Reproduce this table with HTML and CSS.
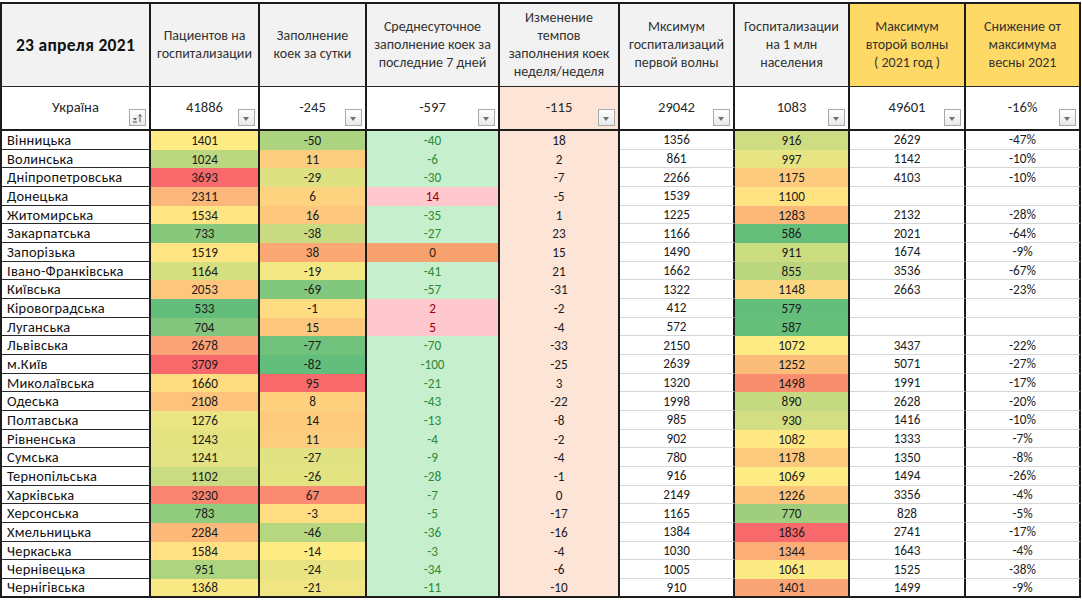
FILE: index.html
```html
<!DOCTYPE html>
<html lang="uk">
<head>
<meta charset="utf-8">
<title>23 апреля 2021</title>
<link rel="stylesheet" href="styles.css">
</head>
<body>
<div class="sheet">
  <div class="c hd first title">23 апреля 2021</div>
  <div class="c hd">Пациентов на<br>госпитализации</div>
  <div class="c hd">Заполнение<br>коек за сутки</div>
  <div class="c hd">Среднесуточное<br>заполнение коек за<br>последние 7 дней</div>
  <div class="c hd">Изменение<br>темпов<br>заполнения коек<br>неделя/неделя</div>
  <div class="c hd">Мксимум<br>госпитализаций<br>первой волны</div>
  <div class="c hd">Госпитализации<br>на 1 млн<br>населения</div>
  <div class="c hd gold">Максимум<br>второй волны<br>( 2021 год )</div>
  <div class="c hd gold">Снижение от<br>максимума<br>весны 2021</div>

  <div class="c uk first">Україна<span class="btn sortbtn"><svg width="11" height="11" viewBox="0 0 11 11"><path d="M1 6h4l-2 2.5z" fill="#555"/><path d="M1 10h4" stroke="#555" stroke-width="1"/><path d="M8 10V2.5M6.5 4.5L8 2.5l1.5 2" stroke="#555" stroke-width="1" fill="none"/></svg></span></div>
  <div class="c uk">41886<span class="btn"></span></div>
  <div class="c uk">-245<span class="btn"></span></div>
  <div class="c uk">-597<span class="btn"></span></div>
  <div class="c uk peach">-115<span class="btn"></span></div>
  <div class="c uk">29042<span class="btn"></span></div>
  <div class="c uk">1083<span class="btn"></span></div>
  <div class="c uk">49601<span class="btn"></span></div>
  <div class="c uk">-16%<span class="btn"></span></div>

  <div class="c nm first">Вінницька</div><div class="c sc" style="background:#FFEB84">1401</div><div class="c sc" style="background:#ACD37F">-50</div><div class="c gr">-40</div><div class="c pe">18</div><div class="c wh">1356</div><div class="c sc" style="background:#CEDD81">916</div><div class="c wh">2629</div><div class="c wh">-47%</div>
  <div class="c nm first">Волинська</div><div class="c sc" style="background:#BBD780">1024</div><div class="c sc" style="background:#FDCD7E">11</div><div class="c gr">-6</div><div class="c pe">2</div><div class="c wh">861</div><div class="c sc" style="background:#E7E483">997</div><div class="c wh">1142</div><div class="c wh">-10%</div>
  <div class="c nm first">Дніпропетровська</div><div class="c sc" style="background:#F86A6B">3693</div><div class="c sc" style="background:#DDE182">-29</div><div class="c gr">-30</div><div class="c pe">-7</div><div class="c wh">2266</div><div class="c sc" style="background:#FCCB7E">1175</div><div class="c wh">4103</div><div class="c wh">-10%</div>
  <div class="c nm first">Донецька</div><div class="c sc" style="background:#FCB87A">2311</div><div class="c sc" style="background:#FED37F">6</div><div class="c pk">14</div><div class="c pe">-5</div><div class="c wh">1539</div><div class="c sc" style="background:#FFE382">1100</div><div class="c wh"></div><div class="c wh"></div>
  <div class="c nm first">Житомирська</div><div class="c sc" style="background:#FFE483">1534</div><div class="c sc" style="background:#FDC77D">16</div><div class="c gr">-35</div><div class="c pe">1</div><div class="c wh">1225</div><div class="c sc" style="background:#FBB878">1283</div><div class="c wh">2132</div><div class="c wh">-28%</div>
  <div class="c nm first">Закарпатська</div><div class="c sc" style="background:#87C87D">733</div><div class="c sc" style="background:#C8DB81">-38</div><div class="c gr">-27</div><div class="c pe">23</div><div class="c wh">1166</div><div class="c sc" style="background:#65BF7B">586</div><div class="c wh">2021</div><div class="c wh">-64%</div>
  <div class="c nm first">Запорізька</div><div class="c sc" style="background:#FFE483">1519</div><div class="c sc" style="background:#FBA874">38</div><div class="c or">0</div><div class="c pe">15</div><div class="c wh">1490</div><div class="c sc" style="background:#CCDC81">911</div><div class="c wh">1674</div><div class="c wh">-9%</div>
  <div class="c nm first">Івано-Франківська</div><div class="c sc" style="background:#D4DF82">1164</div><div class="c sc" style="background:#F3E883">-19</div><div class="c gr">-41</div><div class="c pe">21</div><div class="c wh">1662</div><div class="c sc" style="background:#BAD780">855</div><div class="c wh">3536</div><div class="c wh">-67%</div>
  <div class="c nm first">Київська</div><div class="c sc" style="background:#FDC67D">2053</div><div class="c sc" style="background:#81C77D">-69</div><div class="c gr">-57</div><div class="c pe">-31</div><div class="c wh">1322</div><div class="c sc" style="background:#FDD680">1148</div><div class="c wh">2663</div><div class="c wh">-23%</div>
  <div class="c nm first">Кіровоградська</div><div class="c sc" style="background:#63BE7B">533</div><div class="c sc" style="background:#FEDC81">-1</div><div class="c pk">2</div><div class="c pe">-2</div><div class="c wh">412</div><div class="c sc" style="background:#63BE7B">579</div><div class="c wh"></div><div class="c wh"></div>
  <div class="c nm first">Луганська</div><div class="c sc" style="background:#82C77D">704</div><div class="c sc" style="background:#FDC87D">15</div><div class="c pk">5</div><div class="c pe">-4</div><div class="c wh">572</div><div class="c sc" style="background:#66BF7B">587</div><div class="c wh"></div><div class="c wh"></div>
  <div class="c nm first">Львівська</div><div class="c sc" style="background:#FBA376">2678</div><div class="c sc" style="background:#6FC17C">-77</div><div class="c gr">-70</div><div class="c pe">-33</div><div class="c wh">2150</div><div class="c sc" style="background:#FFEB84">1072</div><div class="c wh">3437</div><div class="c wh">-22%</div>
  <div class="c nm first">м.Київ</div><div class="c sc" style="background:#F8696B">3709</div><div class="c sc" style="background:#63BE7B">-82</div><div class="c gr">-100</div><div class="c pe">-25</div><div class="c wh">2639</div><div class="c sc" style="background:#FBBE7A">1252</div><div class="c wh">5071</div><div class="c wh">-27%</div>
  <div class="c nm first">Миколаївська</div><div class="c sc" style="background:#FEDC81">1660</div><div class="c sc" style="background:#F8696B">95</div><div class="c gr">-21</div><div class="c pe">3</div><div class="c wh">1320</div><div class="c sc" style="background:#F98E6F">1498</div><div class="c wh">1991</div><div class="c wh">-17%</div>
  <div class="c nm first">Одеська</div><div class="c sc" style="background:#FDC37C">2108</div><div class="c sc" style="background:#FED17F">8</div><div class="c gr">-43</div><div class="c pe">-22</div><div class="c wh">1998</div><div class="c sc" style="background:#C5DA81">890</div><div class="c wh">2628</div><div class="c wh">-20%</div>
  <div class="c nm first">Полтавська</div><div class="c sc" style="background:#E9E583">1276</div><div class="c sc" style="background:#FDCA7E">14</div><div class="c gr">-13</div><div class="c pe">-8</div><div class="c wh">985</div><div class="c sc" style="background:#D2DE81">930</div><div class="c wh">1416</div><div class="c wh">-10%</div>
  <div class="c nm first">Рівненська</div><div class="c sc" style="background:#E3E382">1243</div><div class="c sc" style="background:#FDCD7E">11</div><div class="c gr">-4</div><div class="c pe">-2</div><div class="c wh">902</div><div class="c sc" style="background:#FFE984">1082</div><div class="c wh">1333</div><div class="c wh">-7%</div>
  <div class="c nm first">Сумська</div><div class="c sc" style="background:#E2E382">1241</div><div class="c sc" style="background:#E1E282">-27</div><div class="c gr">-9</div><div class="c pe">-4</div><div class="c wh">780</div><div class="c sc" style="background:#FCCA7D">1178</div><div class="c wh">1350</div><div class="c wh">-8%</div>
  <div class="c nm first">Тернопільська</div><div class="c sc" style="background:#C9DC81">1102</div><div class="c sc" style="background:#E4E382">-26</div><div class="c gr">-28</div><div class="c pe">-1</div><div class="c wh">916</div><div class="c sc" style="background:#FEEB84">1069</div><div class="c wh">1494</div><div class="c wh">-26%</div>
  <div class="c nm first">Харківська</div><div class="c sc" style="background:#F98470">3230</div><div class="c sc" style="background:#FA8A71">67</div><div class="c gr">-7</div><div class="c pe">0</div><div class="c wh">2149</div><div class="c sc" style="background:#FCC47C">1226</div><div class="c wh">3356</div><div class="c wh">-4%</div>
  <div class="c nm first">Херсонська</div><div class="c sc" style="background:#90CB7E">783</div><div class="c sc" style="background:#FEDE81">-3</div><div class="c gr">-5</div><div class="c pe">-17</div><div class="c wh">1165</div><div class="c sc" style="background:#9FCF7E">770</div><div class="c wh">828</div><div class="c wh">-5%</div>
  <div class="c nm first">Хмельницька</div><div class="c sc" style="background:#FCB97A">2284</div><div class="c sc" style="background:#B6D680">-46</div><div class="c gr">-36</div><div class="c pe">-16</div><div class="c wh">1384</div><div class="c sc" style="background:#F8696B">1836</div><div class="c wh">2741</div><div class="c wh">-17%</div>
  <div class="c nm first">Черкаська</div><div class="c sc" style="background:#FEE182">1584</div><div class="c sc" style="background:#FFEB84">-14</div><div class="c gr">-3</div><div class="c pe">-4</div><div class="c wh">1030</div><div class="c sc" style="background:#FBAF76">1344</div><div class="c wh">1643</div><div class="c wh">-4%</div>
  <div class="c nm first">Чернівецька</div><div class="c sc" style="background:#AED47F">951</div><div class="c sc" style="background:#E8E483">-24</div><div class="c gr">-34</div><div class="c pe">-6</div><div class="c wh">1005</div><div class="c sc" style="background:#FCEA84">1061</div><div class="c wh">1525</div><div class="c wh">-38%</div>
  <div class="c nm first last">Чернігівська</div><div class="c sc last" style="background:#F9E984">1368</div><div class="c sc last" style="background:#EFE683">-21</div><div class="c gr last">-11</div><div class="c pe last">-10</div><div class="c wh last">910</div><div class="c sc last" style="background:#FAA575">1401</div><div class="c wh last">1499</div><div class="c wh last">-9%</div>
</div>
</body>
</html>
```

FILE: styles.css
```css
* { box-sizing: border-box; }
html, body { margin: 0; padding: 0; background: #ffffff; }
body {
  font-family: "Carlito", "Lato", "Open Sans", sans-serif;
  color: #1b1b1b;
  width: 1082px;
  height: 600px;
  overflow: hidden;
}
.sheet {
  margin-top: 2px;
  display: grid;
  grid-template-columns: 151px 109px 107px 133px 120px 115px 115px 116px 115px;
  grid-template-rows: 85px 44px repeat(25, 18.68px);
}
.c {
  border-right: 2px solid #1c1c1c;
  display: flex;
  align-items: center;
  justify-content: center;
  font-size: 13.2px;
  white-space: nowrap;
  overflow: hidden;
}
.first { border-left: 2px solid #1c1c1c; }
.hd {
  background: #f2f2f2;
  border-top: 2px solid #1c1c1c;
  border-bottom: 1px solid #2a2a2a;
  text-align: center;
  font-size: 14px;
  line-height: 18.2px;
  color: #333333;
}
.hd.gold { background: #ffd966; }
.title { font-size: 17.5px; font-weight: bold; color: #111; letter-spacing: 0.3px; }
.uk {
  position: relative;
  background: #ffffff;
  border-bottom: 2px solid #1c1c1c;
  font-size: 14.6px;
  color: #2a2a2a;
  padding-bottom: 2px;
}
.uk.peach { background: #fce4d6; }
.btn {
  position: absolute;
  right: 3px;
  bottom: 3px;
  width: 17px;
  height: 17px;
  border: 1px solid #a9a9a9;
  background: linear-gradient(#ffffff, #e9e9e9);
}
.btn::after {
  content: "";
  position: absolute;
  left: 4px;
  top: 7px;
  border-left: 3.5px solid transparent;
  border-right: 3.5px solid transparent;
  border-top: 4px solid #707070;
}
.sortbtn::after { display: none; }
.sortbtn svg { position: absolute; left: 2px; top: 2px; }
.nm {
  justify-content: flex-start;
  padding-left: 5px;
  border-bottom: 1px solid #2a2a2a;
  color: #111;
  font-size: 14.4px;
  letter-spacing: 0.25px;
}
.sc { color: #1b1b1b; }
.gr { background: #c6efce; color: #2e8a32; }
.pk { background: #ffc7ce; color: #9c0006; }
.or { background: #f6a16e; color: #3a2414; }
.pe { background: #fce4d6; color: #1b1b1b; }
.wh { background: #ffffff; border-bottom: 1px solid #d6d6d6; }
.last { border-bottom: 2px solid #1c1c1c; }
.wh.last { border-bottom: 2px solid #1c1c1c; }
```
